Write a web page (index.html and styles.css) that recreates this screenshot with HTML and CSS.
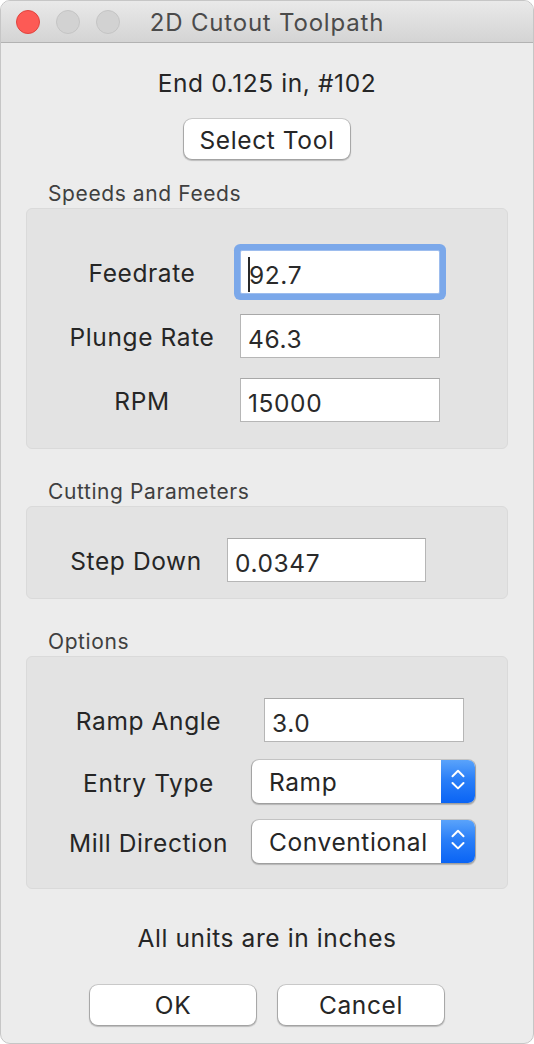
FILE: index.html
```html
<!DOCTYPE html>
<html lang="en">
<head>
<meta charset="utf-8">
<title>2D Cutout Toolpath</title>
<link rel="stylesheet" href="styles.css">
</head>
<body>
<div class="window">
  <div class="titlebar">
    <div class="lights">
      <span class="light light-close"></span>
      <span class="light"></span>
      <span class="light"></span>
    </div>
    <div class="title">2D Cutout Toolpath</div>
    <div class="lights-spacer"></div>
  </div>

  <div class="content">
    <div class="tool-name">End 0.125 in, #102</div>
    <div class="center-row">
      <button class="btn btn-select">Select Tool</button>
    </div>

    <div class="group-title first">Speeds and Feeds</div>
    <div class="group g-speeds">
      <div class="label">Feedrate</div>
      <div class="field focused"><span class="caret"></span>92.7</div>
      <div class="label">Plunge Rate</div>
      <div class="field">46.3</div>
      <div class="label">RPM</div>
      <div class="field">15000</div>
    </div>

    <div class="group-title">Cutting Parameters</div>
    <div class="group g-cutting">
      <div class="label">Step Down</div>
      <div class="field">0.0347</div>
    </div>

    <div class="group-title">Options</div>
    <div class="group g-options">
      <div class="label">Ramp Angle</div>
      <div class="field field-ramp">3.0</div>
      <div class="label">Entry Type</div>
      <div class="popup">
        <span class="popup-text">Ramp</span>
        <span class="stepper">
          <svg width="34" height="43" viewBox="0 0 34 43"><path d="M11.5 16.2 L17 10.8 L22.5 16.2 M11.5 23 L17 28.4 L22.5 23" fill="none" stroke="#fff" stroke-width="2" stroke-linecap="round" stroke-linejoin="round"/></svg>
        </span>
      </div>
      <div class="label">Mill Direction</div>
      <div class="popup">
        <span class="popup-text">Conventional</span>
        <span class="stepper">
          <svg width="34" height="43" viewBox="0 0 34 43"><path d="M11.5 16.2 L17 10.8 L22.5 16.2 M11.5 23 L17 28.4 L22.5 23" fill="none" stroke="#fff" stroke-width="2" stroke-linecap="round" stroke-linejoin="round"/></svg>
        </span>
      </div>
    </div>

    <div class="note">All units are in inches</div>
    <div class="actions">
      <button class="btn btn-action">OK</button>
      <button class="btn btn-action">Cancel</button>
    </div>
  </div>
</div>
</body>
</html>
```

FILE: styles.css
```css
html, body {
  margin: 0;
  padding: 0;
  background: #ffffff;
}

body {
  font-family: Inter, "Liberation Sans", sans-serif;
  color: #262626;
}

.window {
  width: 534px;
  height: 1044px;
  box-sizing: border-box;
  border: 1px solid #c6c6c6;
  border-radius: 10px;
  overflow: hidden;
  background: #ececec;
}

/* ---------- title bar ---------- */
.titlebar {
  display: flex;
  align-items: center;
  height: 41px;
  border-bottom: 1px solid #b2b2b2;
  background: linear-gradient(180deg, #e9e9e9 0%, #d4d4d4 100%);
}

.lights {
  width: 119px;
  box-sizing: border-box;
  padding-left: 15px;
  display: flex;
  gap: 16px;
  align-items: center;
}

.lights-spacer {
  width: 119px;
}

.light {
  width: 24px;
  height: 24px;
  box-sizing: border-box;
  border-radius: 50%;
  background: #d2d2d2;
  border: 1px solid #c4c4c4;
}

.light-close {
  background: #fd5a55;
  border-color: #e0443e;
}

.title {
  flex: 1;
  text-align: center;
  font-size: 24px;
  letter-spacing: 0.8px;
  line-height: 38px;
  padding-top: 3px;
  color: #4b4b4b;
  white-space: nowrap;
}

/* ---------- content ---------- */
.content {
  padding-top: 25px;
}

.tool-name {
  text-align: center;
  font-size: 24.5px;
  letter-spacing: 0.6px;
  line-height: 30px;
}

.center-row {
  display: flex;
  justify-content: center;
  margin-top: 21px;
}

.btn {
  font-family: Inter, "Liberation Sans", sans-serif;
  font-size: 24.5px;
  letter-spacing: 0.6px;
  color: #262626;
  background: #ffffff;
  border: none;
  border-radius: 8px;
  height: 40px;
  padding: 1px 0 0 0;
  line-height: 38px;
  box-sizing: border-box;
  box-shadow: 0 0 0 1px rgba(0, 0, 0, 0.13), 0 1px 1px 0.5px rgba(0, 0, 0, 0.2);
}

.btn-select {
  width: 166px;
}

.group-title {
  margin-top: 30px;
  margin-bottom: 1px;
  padding-left: 47px;
  font-size: 21px;
  line-height: 26px;
  letter-spacing: 0.6px;
  color: #3f3f3f;
}

.group-title.first {
  margin-top: 22px;
}

.group {
  margin: 0 25px;
  border: 1px solid #dadada;
  border-radius: 6px;
  background: #e3e3e3;
  display: grid;
  align-items: start;
}

.g-speeds {
  padding: 41px 0 26px 19px;
  grid-template-columns: 192px 200px;
  grid-auto-rows: 44px;
  column-gap: 2px;
  row-gap: 20px;
}

.g-cutting {
  padding: 31px 0 16px 19px;
  grid-template-columns: 180px 199px;
  grid-auto-rows: 44px;
  column-gap: 1px;
}

.g-options {
  padding: 41px 0 24.5px 19px;
  grid-template-columns: 205px 223px;
  grid-template-rows: 45.6px 44px 44px;
  column-gap: 1px;
  row-gap: 16px;
}

.label {
  height: 44px;
  box-sizing: border-box;
  padding-top: 2px;
  line-height: 42px;
  font-size: 24.5px;
  letter-spacing: 0.6px;
  text-align: center;
  white-space: nowrap;
  color: #262626;
}

.field {
  height: 44px;
  box-sizing: border-box;
  border: 1px solid #b6b6b6;
  border-top-color: #a8a8a8;
  background: #ffffff;
  padding: 6px 0 0 7px;
  line-height: 36px;
  font-size: 24.5px;
  letter-spacing: 0.6px;
  color: #2a2a2a;
  white-space: nowrap;
}

.field.focused {
  border-radius: 2px;
  border-color: #9dbdee;
  box-shadow: 0 0 0 6px #7ba8ea;
}

.field-ramp {
  width: 200px;
  margin-left: 12px;
}

.caret {
  display: inline-block;
  width: 2px;
  height: 35px;
  margin-right: -1px;
  vertical-align: -8px;
  background: #2a2a2a;
}

.popup {
  display: flex;
  height: 43px;
  border-radius: 7px;
  background: #ffffff;
  box-shadow: 0 0 0 1px rgba(0, 0, 0, 0.12), 0 1px 1px 0.5px rgba(0, 0, 0, 0.2);
  overflow: hidden;
}

.popup-text {
  flex: 1;
  padding: 2px 0 0 17px;
  line-height: 41px;
  font-size: 24.5px;
  letter-spacing: 0.6px;
  color: #262626;
  white-space: nowrap;
}

.stepper {
  width: 34px;
  height: 43px;
  display: block;
  background: linear-gradient(180deg, #5aa3fb 0%, #2a7ff8 45%, #0a64f5 100%);
}

.stepper svg {
  display: block;
}

.note {
  margin-top: 33.6px;
  text-align: center;
  font-size: 24.5px;
  letter-spacing: 0.6px;
  line-height: 30px;
}

.actions {
  display: flex;
  justify-content: center;
  gap: 22px;
  margin-top: 32px;
}

.btn-action {
  width: 166px;
}
```
